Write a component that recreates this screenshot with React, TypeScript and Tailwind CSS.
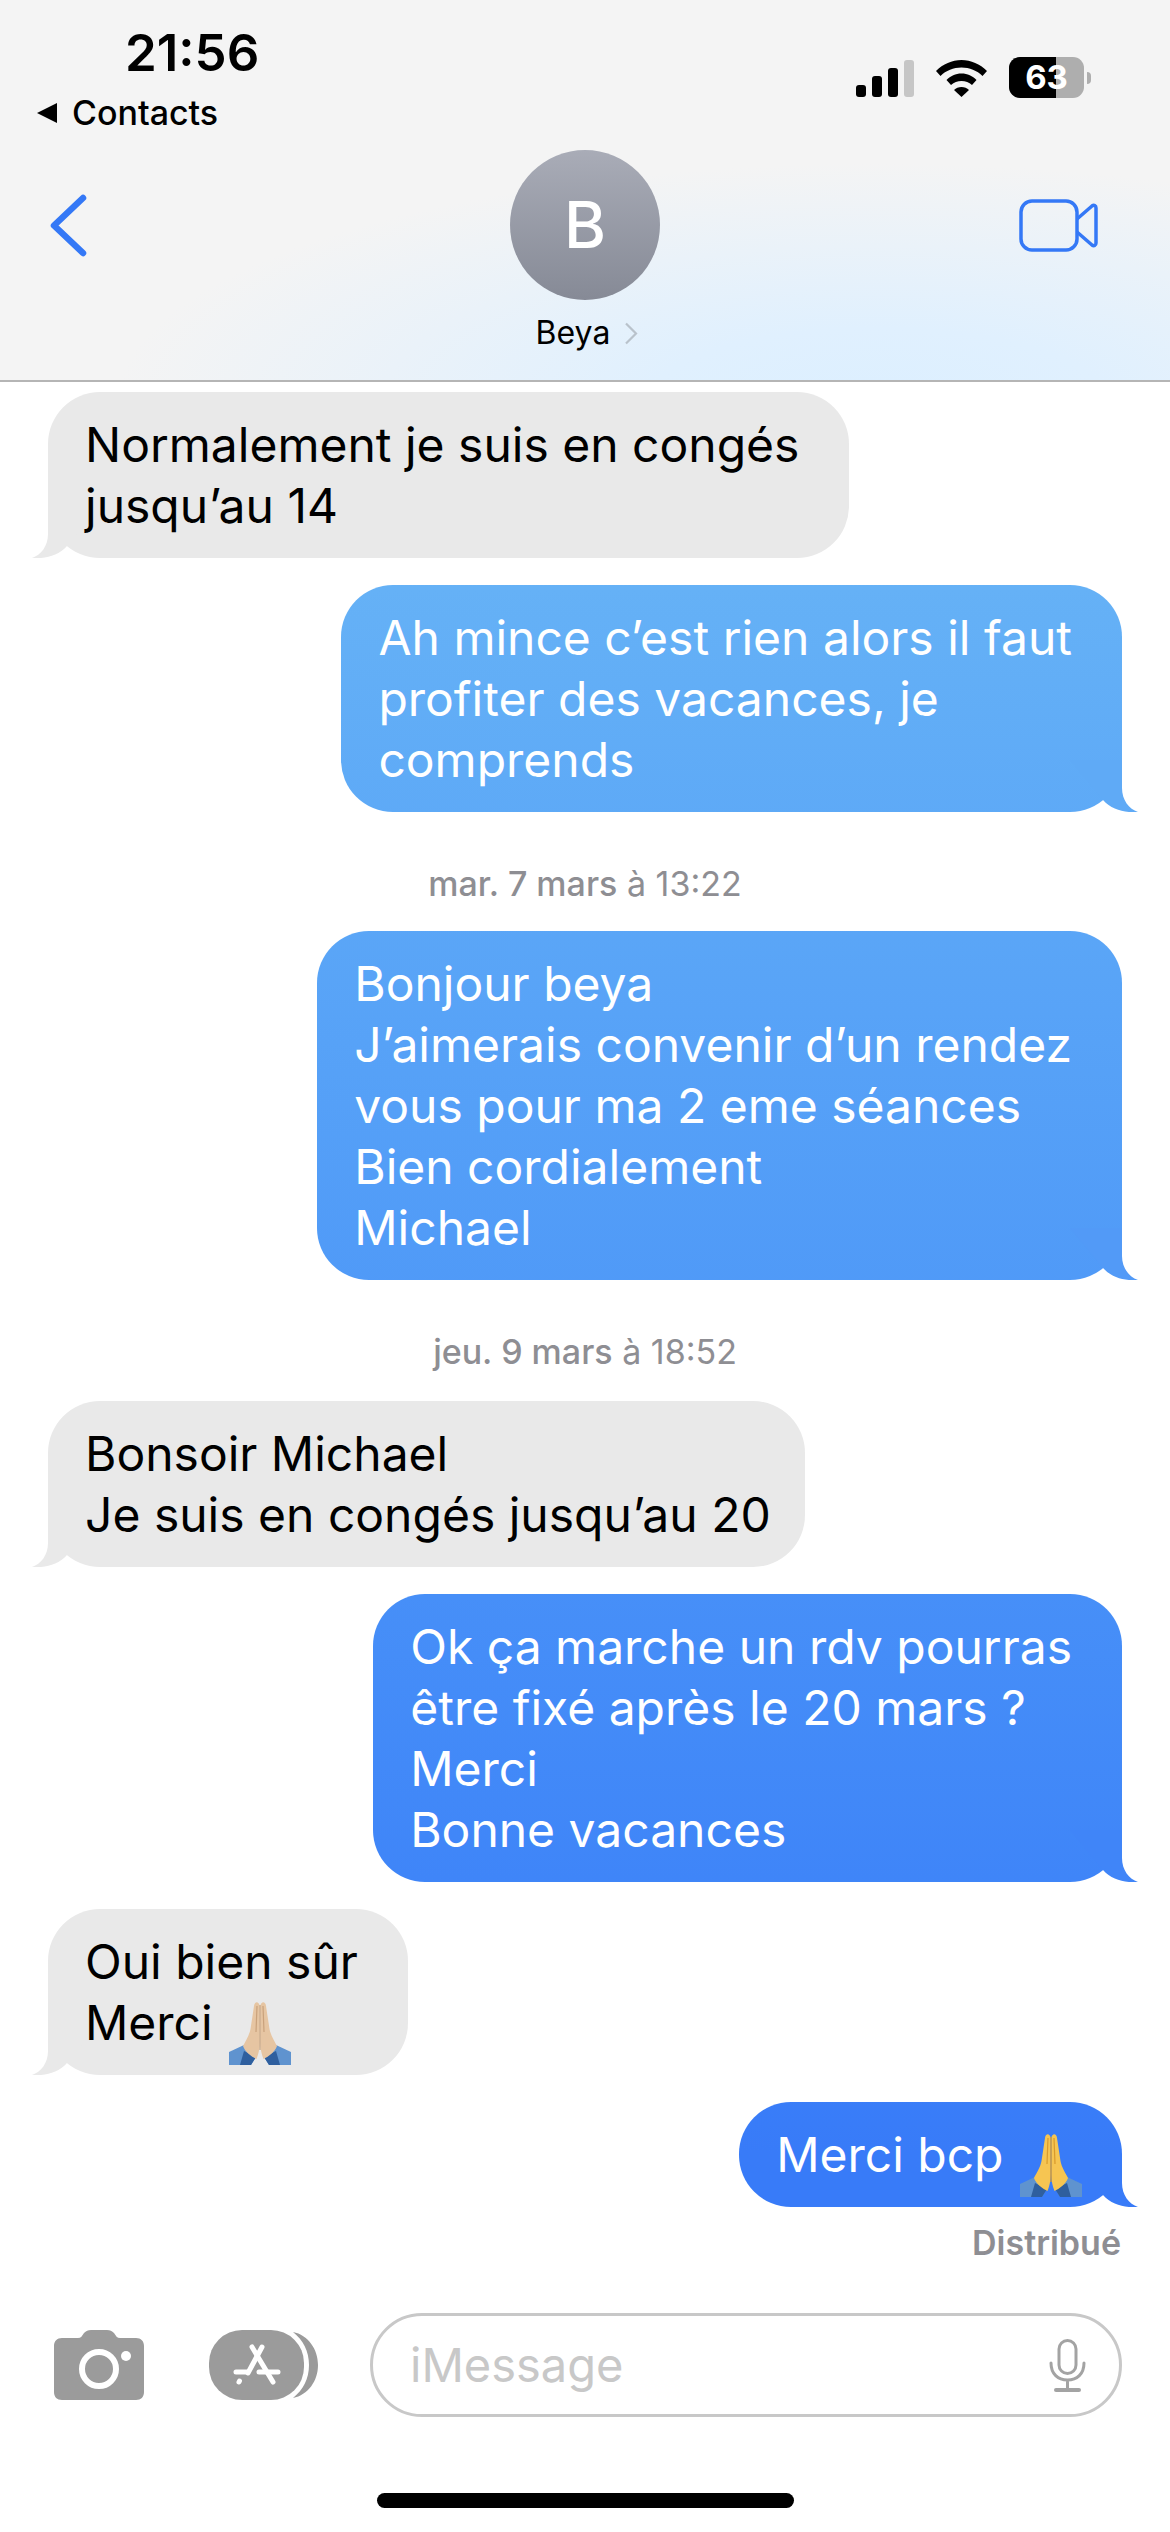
import React from 'react';

type Msg = {
  from: 'me' | 'them';
  lines: React.ReactNode[];
  top: string;
  tail: string;
  tight?: boolean;
};

const PrayHands = ({ skin, shade, last }: { skin: string; shade: string; last?: boolean }) => (
  <svg
    viewBox="0 0 62 63"
    className={`inline-block w-[62px] h-[63px] -my-3 ml-[3px] align-[-13px] ${last ? 'mr-[-10px]' : ''}`}
  >
    <path d="M0 50 L15 43 L27 55 L22 63 L0 63 Z" fill="#5f93cf" />
    <path d="M62 50 L47 43 L35 55 L40 63 L62 63 Z" fill="#5f93cf" />
    <path d="M15 49 L27 55 L22 63 L11 63 Z M47 49 L35 55 L40 63 L51 63 Z" fill="#2f5f9e" />
    <path d="M30.6 4 C30 -1 25.5 -1 25 4 L21.5 27 C20.5 33 16 40 14 44 C16 50 23 55 27.5 57 C29.5 52 30.6 47 30.6 41 Z" fill={skin} />
    <path d="M31.4 4 C32 -1 36.5 -1 37 4 L40.5 27 C41.5 33 46 40 48 44 C46 50 39 55 34.5 57 C32.5 52 31.4 47 31.4 41 Z" fill={skin} />
    <path d="M28 4 L27 30 M34 4 L35 30 M31 3 L31 48" stroke={shade} strokeWidth="1.2" fill="none" />
  </svg>
);

const messages: Msg[] = [
  { from: 'them', top: 'mt-[10px]', tail: '#e9e9e9', lines: ['Normalement je suis en congés', 'jusqu’au 14'] },
  { from: 'me', top: 'mt-[27px]', tail: '#5faaf6', lines: ['Ah mince c’est rien alors il faut', 'profiter des vacances, je', 'comprends'] },
  { from: 'me', top: 'mt-[29px]', tail: '#529af7', lines: ['Bonjour beya', 'J’aimerais convenir d’un rendez', 'vous pour ma 2 eme séances', 'Bien cordialement', 'Michael'] },
  { from: 'them', top: 'mt-[31px]', tail: '#e9e9e9', tight: true, lines: ['Bonsoir Michael', 'Je suis en congés jusqu’au 20'] },
  { from: 'me', top: 'mt-[27px]', tail: '#4085f8', lines: ['Ok ça marche un rdv pourras', 'être fixé après le 20 mars ?', 'Merci', 'Bonne vacances'] },
  {
    from: 'them',
    top: 'mt-[27px]',
    tail: '#e9e9e9',
    lines: ['Oui bien sûr', <>Merci <PrayHands skin="#e6c5a2" shade="#c9a27c" /></>],
  },
  {
    from: 'me',
    top: 'mt-[27px]',
    tail: '#387bf8',
    lines: [<>Merci bcp <PrayHands skin="#f6c552" shade="#d99a2b" last /></>],
  },
];

const Tail = ({ color, flip }: { color: string; flip: boolean }) => (
  <svg
    viewBox="0 0 70 52"
    className={flip ? 'absolute bottom-0 right-[-16px] w-[70px] h-[52px] -scale-x-100' : 'absolute bottom-0 left-[-16px] w-[70px] h-[52px]'}
  >
    <path d="M16 0 L16 28 C16 40 9 49 0 52 C13 53 26 50 35 40 L68 0 Z" fill={color} />
  </svg>
);

const Bubble = ({ msg }: { msg: Msg }) => {
  const mine = msg.from === 'me';
  const pad = msg.tight ? 'pl-[37px] pr-[34px]' : 'pl-[37px] pr-[50px]';
  return (
    <div className={`flex ${mine ? 'justify-end pr-[48px]' : 'justify-start pl-[48px]'} ${msg.top}`}>
      <div
        className={
          mine
            ? `relative rounded-[52px] ${pad} py-[22px] text-white bg-[#387bf8] bg-fixed bg-linear-to-b from-[#66b2f6] from-[22%] to-[#387bf8] to-[85%]`
            : `relative rounded-[52px] ${pad} py-[22px] text-black bg-[#e9e9e9]`
        }
      >
        <Tail color={msg.tail} flip={mine} />
        <div className="relative text-[48px] leading-[61px] whitespace-nowrap">
          {msg.lines.map((l, i) => (
            <div key={i}>{l}</div>
          ))}
        </div>
      </div>
    </div>
  );
};

const Stamp = ({ day, time, top }: { day: string; time: string; top: string }) => (
  <div className={`text-center text-[34px] leading-[36px] text-[#8e8e93] ${top}`}>
    <span className="font-medium">{day}</span> {time}
  </div>
);

const StatusIcons = () => (
  <div className="flex items-center">
    <svg viewBox="0 0 58 37" className="w-[58px] h-[37px]">
      <rect x="0" y="25" width="10" height="12" rx="3" fill="#000" />
      <rect x="16" y="16" width="10" height="21" rx="3" fill="#000" />
      <rect x="32" y="8" width="10" height="29" rx="3" fill="#000" />
      <rect x="48" y="0" width="10" height="37" rx="3" fill="#c6c6c6" />
    </svg>
    <svg viewBox="0 0 51 37" className="w-[51px] h-[37px] ml-[22px]">
      <path d="M25.5 0 C35 0 44 4 51 11 L46.5 16 C41 10.500 33.500 7.500 25.500 7.500 C17.500 7.500 10 10.500 4.500 16 L0 11 C7 4 16 0 25.500 0 Z" fill="#000" />
      <path d="M25.5 13.500 C31.500 13.500 36.500 16 40.500 20 L36 25 C33 22.500 29.500 21 25.500 21 C21.500 21 18 22.500 15 25 L10.500 20 C14.500 16 19.500 13.500 25.500 13.500 Z" fill="#000" />
      <path d="M25.500 27 C28.500 27 31 28 33 30 L25.500 37 L18 30 C20 28 22.500 27 25.500 27 Z" fill="#000" />
    </svg>
    <div className="flex items-center ml-[22px] mt-[-1px]">
      <div className="relative flex w-[75px] h-[41px] rounded-[11px] overflow-hidden bg-[#aeaeae]">
        <div className="w-[47px] bg-black" />
        <span className="absolute inset-0 text-center text-white font-bold text-[33px] leading-[41px]">63</span>
      </div>
      <div className="w-[4px] h-[12px] ml-[3px] rounded-r-full bg-[#aeaeae]" />
    </div>
  </div>
);

const AppStoreIcon = () => (
  <svg viewBox="0 0 109 70" className="w-[109px] h-[70px] ml-[65px]">
    <path d="M84 2 C99 5 109 19 109 35 C109 51 99 65 84 68 C94 60 100 49 100 35 C100 21 94 10 84 2 Z" fill="#9b9b9b" />
    <rect x="0" y="0" width="95" height="70" rx="33" ry="33" fill="#9b9b9b" />
    <g stroke="#fff" strokeWidth="5" strokeLinecap="round" fill="none">
      <path d="M43 17 L64 52" />
      <path d="M53 17 L39 43" />
      <path d="M27 42 H38 M50 42 H69" />
      <path d="M30.500 51 L30 52" />
    </g>
  </svg>
);

export default function App() {
  return (
    <div className="w-[1170px] h-[2532px] overflow-hidden flex flex-col bg-white font-[family-name:Inter,sans-serif]">
      <header className="h-[382px] shrink-0 border-b-2 border-[#b5b5b5] bg-[#f4f4f4] bg-[radial-gradient(ellipse_65%_62%_at_75%_105%,#dcefff_0%,#e0f0fe_30%,#f4f4f4_100%)] flex flex-col">
        <div className="h-[150px] flex justify-between shrink-0">
          <div className="pl-[37px] pt-[28px]">
            <div className="pl-[88px] text-[51px] leading-[50px] font-semibold text-black">21:56</div>
            <div className="flex items-center mt-[15px] text-[34px] leading-[40px] text-black font-medium">
              <span className="w-0 h-0 border-y-[10px] border-y-transparent border-r-[20px] border-r-black mr-[15px]" />
              Contacts
            </div>
          </div>
          <div className="pr-[79px] pt-[58px]">
            <StatusIcons />
          </div>
        </div>
        <div className="flex items-center h-[150px] shrink-0 pl-[50px] pr-[72px]">
          <div className="w-[460px]">
            <svg viewBox="0 0 37 63" className="w-[37px] h-[63px]">
              <path d="M33 4 L4 31.500 L33 59" stroke="#3478f6" strokeWidth="6.500" strokeLinecap="round" strokeLinejoin="round" fill="none" />
            </svg>
          </div>
          <div className="w-[150px] h-[150px] rounded-full flex items-center justify-center text-white text-[64px] font-medium bg-linear-to-b from-[#a9acb7] to-[#868a96]">
            B
          </div>
          <div className="flex-1 flex justify-end">
            <svg viewBox="0 0 79 53" className="w-[79px] h-[53px]">
              <rect x="2" y="2" width="56" height="49" rx="11" stroke="#3478f6" strokeWidth="3.500" fill="none" />
              <path d="M58 20 L73 7 C75 5.500 77 6.500 77 9 L77 44 C77 46.500 75 47.500 73 46 L58 33" stroke="#3478f6" strokeWidth="3.500" strokeLinejoin="round" fill="none" />
            </svg>
          </div>
        </div>
        <div className="flex items-center justify-center mt-[14px] text-[32px] leading-[38px] text-black pl-[4px]">
          Beya
          <svg viewBox="0 0 14 23" className="w-[14px] h-[23px] ml-[14px]">
            <path d="M2 1.500 L12 11.500 L2 21.500" stroke="#b9c2cb" strokeWidth="2.200" fill="none" />
          </svg>
        </div>
      </header>

      <main className="flex-1 flex flex-col">
        <Bubble msg={messages[0]} />
        <Bubble msg={messages[1]} />
        <Stamp day="mar. 7 mars" time="à 13:22" top="mt-[54px]" />
        <Bubble msg={messages[2]} />
        <Stamp day="jeu. 9 mars" time="à 18:52" top="mt-[54px]" />
        <Bubble msg={messages[3]} />
        <Bubble msg={messages[4]} />
        <Bubble msg={messages[5]} />
        <Bubble msg={messages[6]} />
        <div className="text-right pr-[49px] mt-[18px] text-[34px] leading-[36px] font-semibold text-[#8e8e93]">Distribué</div>

        <div className="flex items-center mt-[52px] pl-[54px] pr-[48px]">
          <svg viewBox="0 0 90 70" className="w-[90px] h-[70px] shrink-0">
            <path d="M8 8 H24 C27 8 28 6 30 3 C32 1 34 0 37 0 H53 C56 0 58 1 60 3 C62 6 63 8 66 8 H82 C87 8 90 11 90 16 V62 C90 67 87 70 82 70 H8 C3 70 0 67 0 62 V16 C0 11 3 8 8 8 Z" fill="#9b9b9b" />
            <circle cx="45" cy="39" r="17" stroke="#fff" strokeWidth="6" fill="none" />
            <circle cx="72" cy="26" r="5" fill="#fff" />
          </svg>
          <AppStoreIcon />
          <div className="ml-[52px] flex-1 h-[104px] rounded-[52px] border-[3px] border-[#c8c8c8] flex items-center justify-between pl-[37px] pr-[33px]">
            <span className="text-[47px] text-[#c8c8c8]">iMessage</span>
            <svg viewBox="0 0 37 53" className="w-[37px] h-[53px]">
              <rect x="10" y="1.500" width="17" height="33" rx="8.500" stroke="#a3a3a3" strokeWidth="3" fill="none" />
              <path d="M2 24 C2 35 9 41 18.500 41 C28 41 35 35 35 24 M18.500 41 V50" stroke="#a3a3a3" strokeWidth="3" strokeLinecap="round" fill="none" />
              <path d="M7 51 H30" stroke="#a3a3a3" strokeWidth="4" strokeLinecap="round" />
            </svg>
          </div>
        </div>

        <div className="mt-[76px] mx-auto w-[417px] h-[15px] rounded-full bg-black" />
      </main>
    </div>
  );
}
